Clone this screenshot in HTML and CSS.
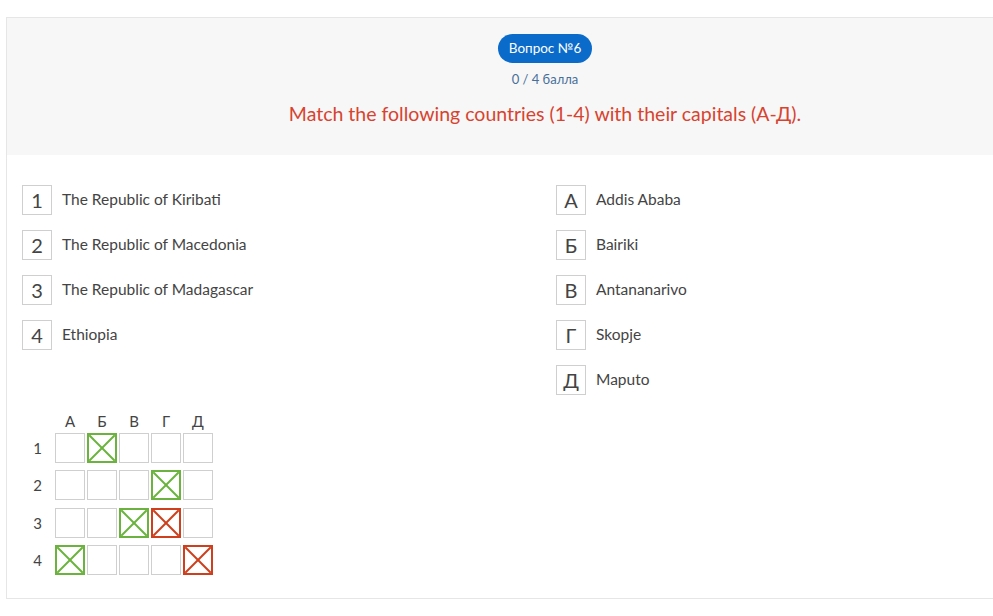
FILE: index.html
```html
<!DOCTYPE html>
<html>
<head>
<meta charset="utf-8">
<link rel="stylesheet" href="styles.css">
</head>
<body>
<div class="page">
<div class="card">
  <div class="head">
    <div class="badge">Вопрос №6</div>
    <div class="score">0 / 4 балла</div>
    <div class="title">Match the following countries (1-4) with their capitals (А-Д).</div>
  </div>
  <div class="body">
    <div class="cols">
      <div class="col">
        <div class="item"><span class="key">1</span><span class="txt">The Republic of Kiribati</span></div>
        <div class="item"><span class="key">2</span><span class="txt">The Republic of Macedonia</span></div>
        <div class="item"><span class="key">3</span><span class="txt">The Republic of Madagascar</span></div>
        <div class="item"><span class="key">4</span><span class="txt">Ethiopia</span></div>
      </div>
      <div class="col">
        <div class="item"><span class="key">А</span><span class="txt">Addis Ababa</span></div>
        <div class="item"><span class="key">Б</span><span class="txt">Bairiki</span></div>
        <div class="item"><span class="key">В</span><span class="txt">Antananarivo</span></div>
        <div class="item"><span class="key">Г</span><span class="txt">Skopje</span></div>
        <div class="item"><span class="key">Д</span><span class="txt">Maputo</span></div>
      </div>
    </div>
    <div class="matrix">
      <span></span><span class="ch">А</span><span class="ch">Б</span><span class="ch">В</span><span class="ch">Г</span><span class="ch">Д</span>
      <span class="rh">1</span><span class="cell"></span><span class="cell ok"></span><span class="cell"></span><span class="cell"></span><span class="cell"></span>
      <span class="rh">2</span><span class="cell"></span><span class="cell"></span><span class="cell"></span><span class="cell ok"></span><span class="cell"></span>
      <span class="rh">3</span><span class="cell"></span><span class="cell"></span><span class="cell ok"></span><span class="cell bad"></span><span class="cell"></span>
      <span class="rh">4</span><span class="cell ok"></span><span class="cell"></span><span class="cell"></span><span class="cell"></span><span class="cell bad"></span>
    </div>
  </div>
</div>
</div>
</body>
</html>
```
FILE: styles.css
```css
html, body {
  margin: 0;
  padding: 0;
  background: #fff;
  font-family: Lato, "Open Sans", sans-serif;
}
.page {
  width: 993px;
  height: 616px;
  overflow: hidden;
}
.card {
  margin: 17px 0 0 6px;
  width: 1100px;
  border: 1px solid #e6e6e6;
  border-right: none;
}
.head {
  background: #f7f7f7;
  padding: 16px 0 0;
  height: 121px;
  display: flex;
  flex-direction: column;
  align-items: center;
  width: 1076px;
  box-shadow: 24px 0 0 #f7f7f7;
}
.badge {
  background: #0a6bca;
  color: #fff;
  font-size: 13.5px;
  height: 29px;
  line-height: 29px;
  padding: 0 11px;
  border-radius: 15px;
}
.score {
  color: #466f99;
  font-size: 13px;
  margin-top: 8px;
  line-height: 17px;
}
.title {
  color: #d8432f;
  font-size: 19.5px;
  margin-top: 14px;
  line-height: 24px;
}
.body {
  padding: 30px 15px 23px;
}
.cols {
  display: grid;
  grid-template-columns: 534px 534px;
}
.col {
  display: flex;
  flex-direction: column;
  gap: 15px;
}
.item {
  display: flex;
  align-items: center;
  height: 30px;
}
.key {
  width: 30px;
  height: 30px;
  box-sizing: border-box;
  border: 1px solid #cfcfcf;
  display: flex;
  align-items: center;
  justify-content: center;
  font-size: 20px;
  color: #444;
  flex: none;
}
.txt {
  margin-left: 10px;
  font-size: 15.5px;
  color: #444;
  margin-top: -3px;
}
.matrix {
  margin-top: 10px;
  display: grid;
  grid-template-columns: 31px repeat(5, 30px);
  grid-template-rows: 20px repeat(4, 30px);
  column-gap: 2px;
  row-gap: 7.6px;
}
.ch, .rh {
  font-size: 15px;
  color: #444;
  display: flex;
  align-items: center;
  justify-content: center;
}
.ch { align-items: flex-end; margin-bottom: -5px; }
.cell {
  border: 1px solid #cfcfcf;
  box-sizing: border-box;
  position: relative;
}
.cell.ok, .cell.bad {
  border-width: 2px;
}
.cell.ok { border-color: #6bb23e; }
.cell.bad { border-color: #cd3f1d; }
.cell.ok::before, .cell.ok::after, .cell.bad::before, .cell.bad::after {
  content: "";
  position: absolute;
  left: 50%;
  top: 50%;
  width: 36px;
  height: 2px;
  margin: -1px 0 0 -18px;
  transform: rotate(45deg);
}
.cell.ok::before, .cell.ok::after { background: #6bb23e; }
.cell.bad::before, .cell.bad::after { background: #cd3f1d; }
.cell.ok::after, .cell.bad::after { transform: rotate(-45deg); }
```
